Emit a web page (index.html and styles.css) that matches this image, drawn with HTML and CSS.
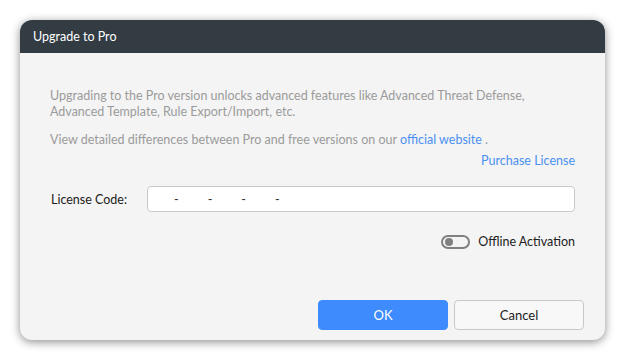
FILE: index.html
```html
<!DOCTYPE html>
<html lang="en">
<head>
  <meta charset="UTF-8" />
  <title>Upgrade to Pro</title>
  <link rel="stylesheet" href="styles.css">
</head>
<body>
  <div class="dialog">
    <div class="dialog-header">Upgrade to Pro</div>

    <div class="dialog-body">
      <p class="intro">Upgrading to the Pro version unlocks advanced features like Advanced Threat Defense, Advanced Template, Rule Export/Import, etc.</p>
      <p class="intro last">View detailed differences between Pro and free versions on our <a class="link" href="#">official website</a> .</p>

      <div class="purchase"><a class="link" href="#">Purchase License</a></div>

      <div class="license-row">
        <span class="label">License Code:</span>
        <div class="code-input">
          <span>-</span><span>-</span><span>-</span><span>-</span>
        </div>
      </div>

      <div class="offline-row">
        <span class="toggle"><span class="knob"></span></span>
        <span class="offline-label">Offline Activation</span>
      </div>
    </div>

    <div class="dialog-footer">
      <button class="btn primary">OK</button>
      <button class="btn">Cancel</button>
    </div>
  </div>
</body>
</html>
```

FILE: styles.css
```css
html, body {
  margin: 0;
  background-color: #ffffff;
}

body {
  padding: 20px;
  font-family: Lato, "Noto Sans", sans-serif;
  font-size: 12.5px;
}

.dialog {
  width: 585px;
  height: 320px;
  background-color: #f4f4f4;
  border-radius: 12px;
  overflow: hidden;
  display: flex;
  flex-direction: column;
  box-shadow: 0 2px 10px rgba(0, 0, 0, 0.45);
}

.dialog-header {
  height: 33px;
  background-color: #323c42;
  color: #ffffff;
  font-size: 12.5px;
  line-height: 33px;
  padding-left: 13px;
}

.dialog-body {
  flex: 1;
  padding: 35px 30px 0 30px;
}

.intro {
  margin: 0 0 12px 0;
  color: #9b9b9b;
  line-height: 16px;
}

.intro.last {
  margin-bottom: 5px;
}

.link {
  color: #4a90f0;
  text-decoration: none;
}

.purchase {
  text-align: right;
  line-height: 16px;
}

.license-row {
  display: flex;
  align-items: center;
  margin-top: 17px;
  padding-left: 1px;
}

.label {
  color: #222222;
  width: 96px;
}

.code-input {
  flex: 1;
  height: 24px;
  border: 1px solid #c8c8c8;
  border-radius: 4px;
  background-color: #ffffff;
  display: flex;
  align-items: center;
  gap: 29px;
  padding-left: 26px;
  color: #333333;
}

.offline-row {
  display: flex;
  justify-content: flex-end;
  align-items: center;
  gap: 8px;
  margin-top: 22px;
  line-height: 16px;
}

.toggle {
  box-sizing: border-box;
  width: 29px;
  height: 14px;
  border: 2px solid #808080;
  border-radius: 7px;
  display: flex;
  align-items: center;
  padding-left: 2px;
}

.knob {
  width: 8px;
  height: 8px;
  border-radius: 50%;
  background-color: #808080;
}

.offline-label {
  color: #222222;
}

.dialog-footer {
  display: flex;
  justify-content: flex-end;
  gap: 6px;
  padding: 0 21px 10px 0;
}

.btn {
  width: 130px;
  height: 30px;
  border: 1px solid #c8c8c8;
  border-radius: 4px;
  background-color: #f8f8f8;
  color: #222222;
  font-family: Lato, "Noto Sans", sans-serif;
  font-size: 13px;
}

.btn.primary {
  background-color: #3d8bfd;
  border-color: #3d8bfd;
  color: #ffffff;
}
```
